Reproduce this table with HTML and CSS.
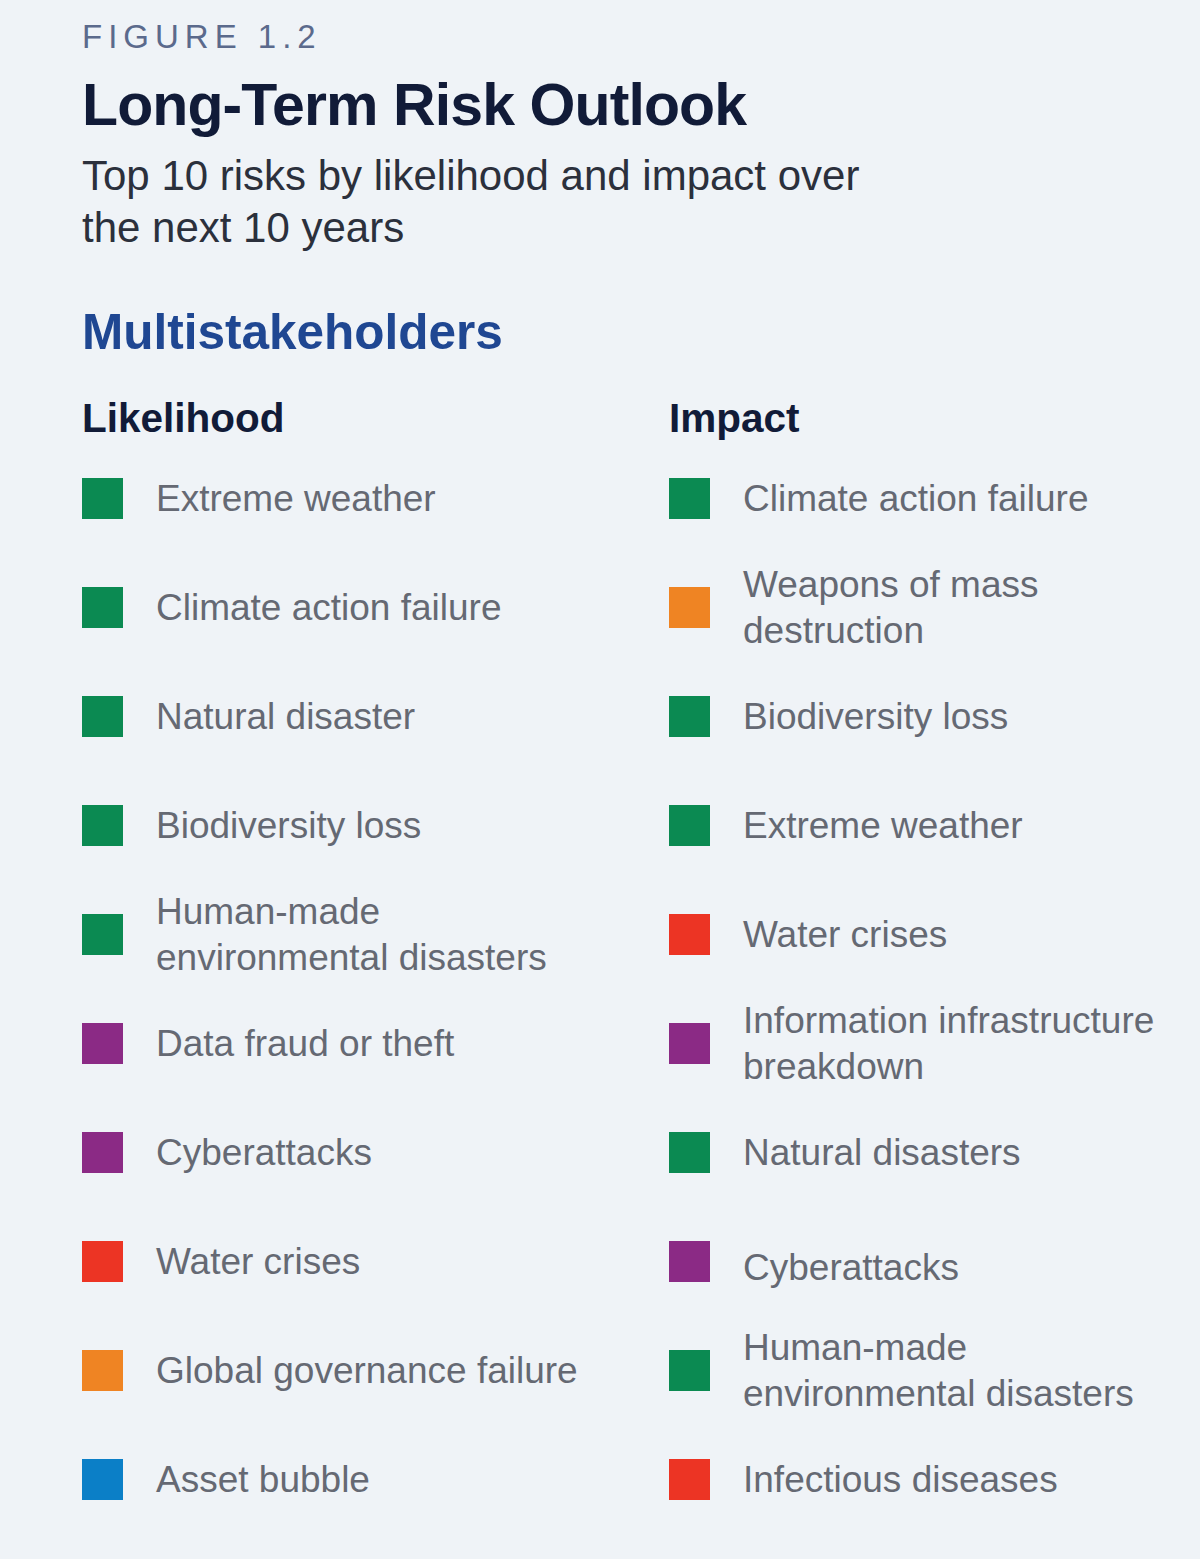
FILE: index.html
```html
<!DOCTYPE html>
<html lang="en">
<head>
<meta charset="utf-8">
<title>Figure 1.2 Long-Term Risk Outlook</title>
<link rel="stylesheet" href="styles.css">
</head>
<body>
<main class="figure">
  <div class="label">FIGURE 1.2</div>
  <h1 class="title">Long-Term Risk Outlook</h1>
  <p class="subtitle">Top 10 risks by likelihood and impact over<br>the next 10 years</p>
  <h2 class="group">Multistakeholders</h2>
  <div class="grid">
    <h3 class="col-head">Likelihood</h3>
    <h3 class="col-head">Impact</h3>

    <div class="item"><span class="sq env"></span><span class="txt">Extreme weather</span></div>
    <div class="item"><span class="sq env"></span><span class="txt">Climate action failure</span></div>

    <div class="item"><span class="sq env"></span><span class="txt">Climate action failure</span></div>
    <div class="item"><span class="sq geo"></span><span class="txt">Weapons of mass<br>destruction</span></div>

    <div class="item"><span class="sq env"></span><span class="txt">Natural disaster</span></div>
    <div class="item"><span class="sq env"></span><span class="txt">Biodiversity loss</span></div>

    <div class="item"><span class="sq env"></span><span class="txt">Biodiversity loss</span></div>
    <div class="item"><span class="sq env"></span><span class="txt">Extreme weather</span></div>

    <div class="item"><span class="sq env"></span><span class="txt">Human-made<br>environmental disasters</span></div>
    <div class="item"><span class="sq soc"></span><span class="txt">Water crises</span></div>

    <div class="item"><span class="sq tech"></span><span class="txt">Data fraud or theft</span></div>
    <div class="item"><span class="sq tech"></span><span class="txt">Information infrastructure<br>breakdown</span></div>

    <div class="item"><span class="sq tech"></span><span class="txt">Cyberattacks</span></div>
    <div class="item"><span class="sq env"></span><span class="txt">Natural disasters</span></div>

    <div class="item"><span class="sq soc"></span><span class="txt">Water crises</span></div>
    <div class="item"><span class="sq tech"></span><span class="txt low">Cyberattacks</span></div>

    <div class="item"><span class="sq geo"></span><span class="txt">Global governance failure</span></div>
    <div class="item"><span class="sq env"></span><span class="txt">Human-made<br>environmental disasters</span></div>

    <div class="item"><span class="sq eco"></span><span class="txt">Asset bubble</span></div>
    <div class="item"><span class="sq soc"></span><span class="txt">Infectious diseases</span></div>
  </div>
</main>
</body>
</html>
```
FILE: styles.css
```css
html, body {
  margin: 0;
  padding: 0;
  background: #eff3f7;
}
body {
  font-family: "Liberation Sans", Arial, Helvetica, sans-serif;
  width: 1200px;
  height: 1559px;
  overflow: hidden;
}
.figure {
  padding: 18px 0 0 82px;
}
.label {
  font-size: 33px;
  line-height: 38px;
  letter-spacing: 6px;
  color: #5b6a8c;
}
.title {
  margin: 18px 0 0 0;
  font-size: 59px;
  line-height: 62px;
  font-weight: bold;
  letter-spacing: -0.9px;
  color: #111b38;
}
.subtitle {
  margin: 14px 0 0 0;
  font-size: 42px;
  line-height: 52px;
  letter-spacing: 0;
  color: #2b303c;
}
.group {
  margin: 50px 0 0 0;
  font-size: 49.5px;
  line-height: 56px;
  font-weight: bold;
  letter-spacing: 0;
  color: #1f4792;
}
.grid {
  margin-top: 34px;
  display: grid;
  grid-template-columns: 587px 1fr;
  grid-auto-rows: 109px;
  grid-template-rows: 50px;
}
.col-head {
  margin: 0;
  font-size: 40.5px;
  line-height: 48px;
  font-weight: bold;
  letter-spacing: 0;
  color: #111b38;
  align-self: start;
}
.item {
  display: flex;
  align-items: center;
  gap: 33px;
}
.sq {
  flex: none;
  width: 41px;
  height: 41px;
}
.env { background: #0b8a52; }
.geo { background: #ef8423; }
.soc { background: #ec3424; }
.tech { background: #8b2a85; }
.eco { background: #0b7fc7; }
.txt {
  font-size: 37px;
  line-height: 46px;
  letter-spacing: 0;
  color: #656973;
}
.txt.low {
  padding-top: 12px;
}
```
